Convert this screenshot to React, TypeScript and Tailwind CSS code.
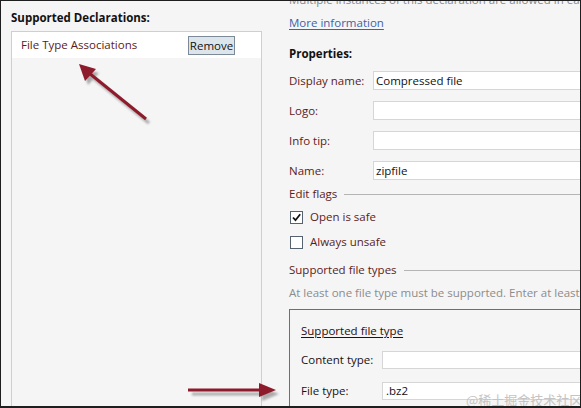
import React from "react";

const font = { fontFamily: '"Open Sans", "Noto Sans", "Noto Sans CJK SC", sans-serif' };

function Field({ label, value, labelW = "w-[84px]" }: { label: string; value?: string; labelW?: string }) {
  return (
    <div className="flex items-center h-[19px]">
      <div className={`${labelW} shrink-0 text-[#5a1c1c]`}>{label}</div>
      <div className="h-[19px] w-[260px] shrink-0 bg-white border border-[#d6d6d6] flex items-center pl-[2px] text-[#111]">
        {value}
      </div>
    </div>
  );
}

function Check({ checked, label }: { checked?: boolean; label: string }) {
  return (
    <div className="flex items-center h-[16px] pl-[1px]">
      <div className="w-[13px] h-[13px] bg-white border border-[#56626e] flex items-center justify-center">
        {checked && (
          <svg width="11" height="11" viewBox="0 0 11 11">
            <path d="M2 5.5 L4.5 8.2 L9.2 2.3" fill="none" stroke="#111" strokeWidth="1.8" />
          </svg>
        )}
      </div>
      <span className="ml-[7px] text-[#5a1c1c]">{label}</span>
    </div>
  );
}

export default function App() {
  return (
    <div
      className="relative w-[581px] h-[408px] overflow-hidden bg-[#f5f5f5] border-t border-l border-r border-b-2 border-[#1e1e1e] text-[11.5px] leading-[16px] text-[#111]"
      style={font}
    >
      <div className="flex h-full">
        {/* Left column */}
        <div className="w-[287px] shrink-0 flex flex-col pl-[10px] pt-[9px]">
          <div className="font-bold h-[16px] leading-[16px]">Supported Declarations:</div>
          <div className="mt-[5px] w-[251px] flex-1 border border-[#cfcfcf] border-b-0 bg-[#f5f5f5] mb-[-1px]">
            <div className="h-[26px] bg-white flex items-center pl-[9px] pr-[26px] justify-between">
              <span className="text-[#5a1c1c]">File Type Associations</span>
              <span className="h-[19px] w-[47px] mt-[1px] border border-[#7c8a97] bg-[#dde5ec] flex items-center justify-center leading-[16px]">
                Remove
              </span>
            </div>
          </div>
        </div>

        {/* Right column */}
        <div className="flex-1 flex flex-col pl-[1px] whitespace-nowrap">
          <div className="h-[8px] overflow-hidden">
            <div className="mt-[-9px] text-[#8a8a8a]">Multiple instances of this declaration are allowed in each app.</div>
          </div>
          <div className="h-[28px] flex items-center">
            <span className="text-[#3e62a8] underline underline-offset-2">More information</span>
          </div>
          <div className="h-[34px] flex items-center font-bold">Properties:</div>
          <div className="flex flex-col gap-[11px]">
            <Field label="Display name:" value="Compressed file" />
            <Field label="Logo:" />
            <Field label="Info tip:" />
            <Field label="Name:" value="zipfile" />
          </div>
          <div className="h-[28px] flex items-center">
            <span className="text-[#5a1c1c]">Edit flags</span>
            <div className="ml-[7px] flex-1 h-px bg-[#b5b5b5]" />
          </div>
          <div className="mt-[1px]">
            <Check checked label="Open is safe" />
          </div>
          <div className="mt-[9px]">
            <Check label="Always unsafe" />
          </div>
          <div className="mt-[9px] h-[22px] flex items-center">
            <span className="text-[#5a1c1c]">Supported file types</span>
            <div className="ml-[7px] flex-1 h-px bg-[#b5b5b5]" />
          </div>
          <div className="h-[24px] flex items-center text-[#8c8c8c]">
            At least one file type must be supported. Enter at least one file type.
          </div>
          <div className="mt-[4px] flex-1 border-l border-t border-[#6f6f6f] pl-[11px] pt-[13px] flex flex-col">
            <div className="h-[16px] underline underline-offset-2 text-[#2a0d0d]">Supported file type</div>
            <div className="mt-[12px] flex items-center h-[18px]">
              <div className="w-[81px] shrink-0 text-[#1c1010]">Content type:</div>
              <div className="h-[18px] w-[220px] shrink-0 bg-white border border-[#d6d6d6]" />
            </div>
            <div className="mt-[13px] flex items-center h-[18px]">
              <div className="w-[81px] shrink-0 text-[#1c1010]">File type:</div>
              <div className="h-[18px] w-[220px] shrink-0 bg-white border border-[#d6d6d6] flex items-center pl-[3px]">.bz2</div>
            </div>
          </div>
        </div>
      </div>

      {/* Watermark */}
      <div
        className="absolute left-[465px] top-[391px] text-[13px] leading-[16px] text-[#c4c4c4] whitespace-nowrap"
        style={{ fontFamily: '"Noto Sans CJK SC", sans-serif' }}
      >
        @稀土掘金技术社区
      </div>

      {/* Arrows */}
      <svg className="absolute left-0 top-0 pointer-events-none" width="581" height="408" viewBox="0 0 581 408">
        <defs>
          <filter id="sh" x="-20%" y="-20%" width="140%" height="140%">
            <feGaussianBlur stdDeviation="1.2" />
          </filter>
        </defs>
        <g opacity="0.55" filter="url(#sh)" transform="translate(3,4)">
          <line x1="145" y1="118" x2="88" y2="72" stroke="#707070" strokeWidth="3" />
          <polygon points="78,63 95,68 84,80" fill="#707070" />
          <line x1="188" y1="389" x2="262" y2="389" stroke="#707070" strokeWidth="3" />
          <polygon points="275,389 258,382 258,396" fill="#707070" />
        </g>
        <line x1="145" y1="118" x2="88" y2="72" stroke="#8d1b2b" strokeWidth="3" />
        <polygon points="78,63 95,68 84,80" fill="#8d1b2b" />
        <line x1="187" y1="389" x2="262" y2="389" stroke="#8d1b2b" strokeWidth="3" />
        <polygon points="275,389 258,382 258,396" fill="#8d1b2b" />
      </svg>
    </div>
  );
}
